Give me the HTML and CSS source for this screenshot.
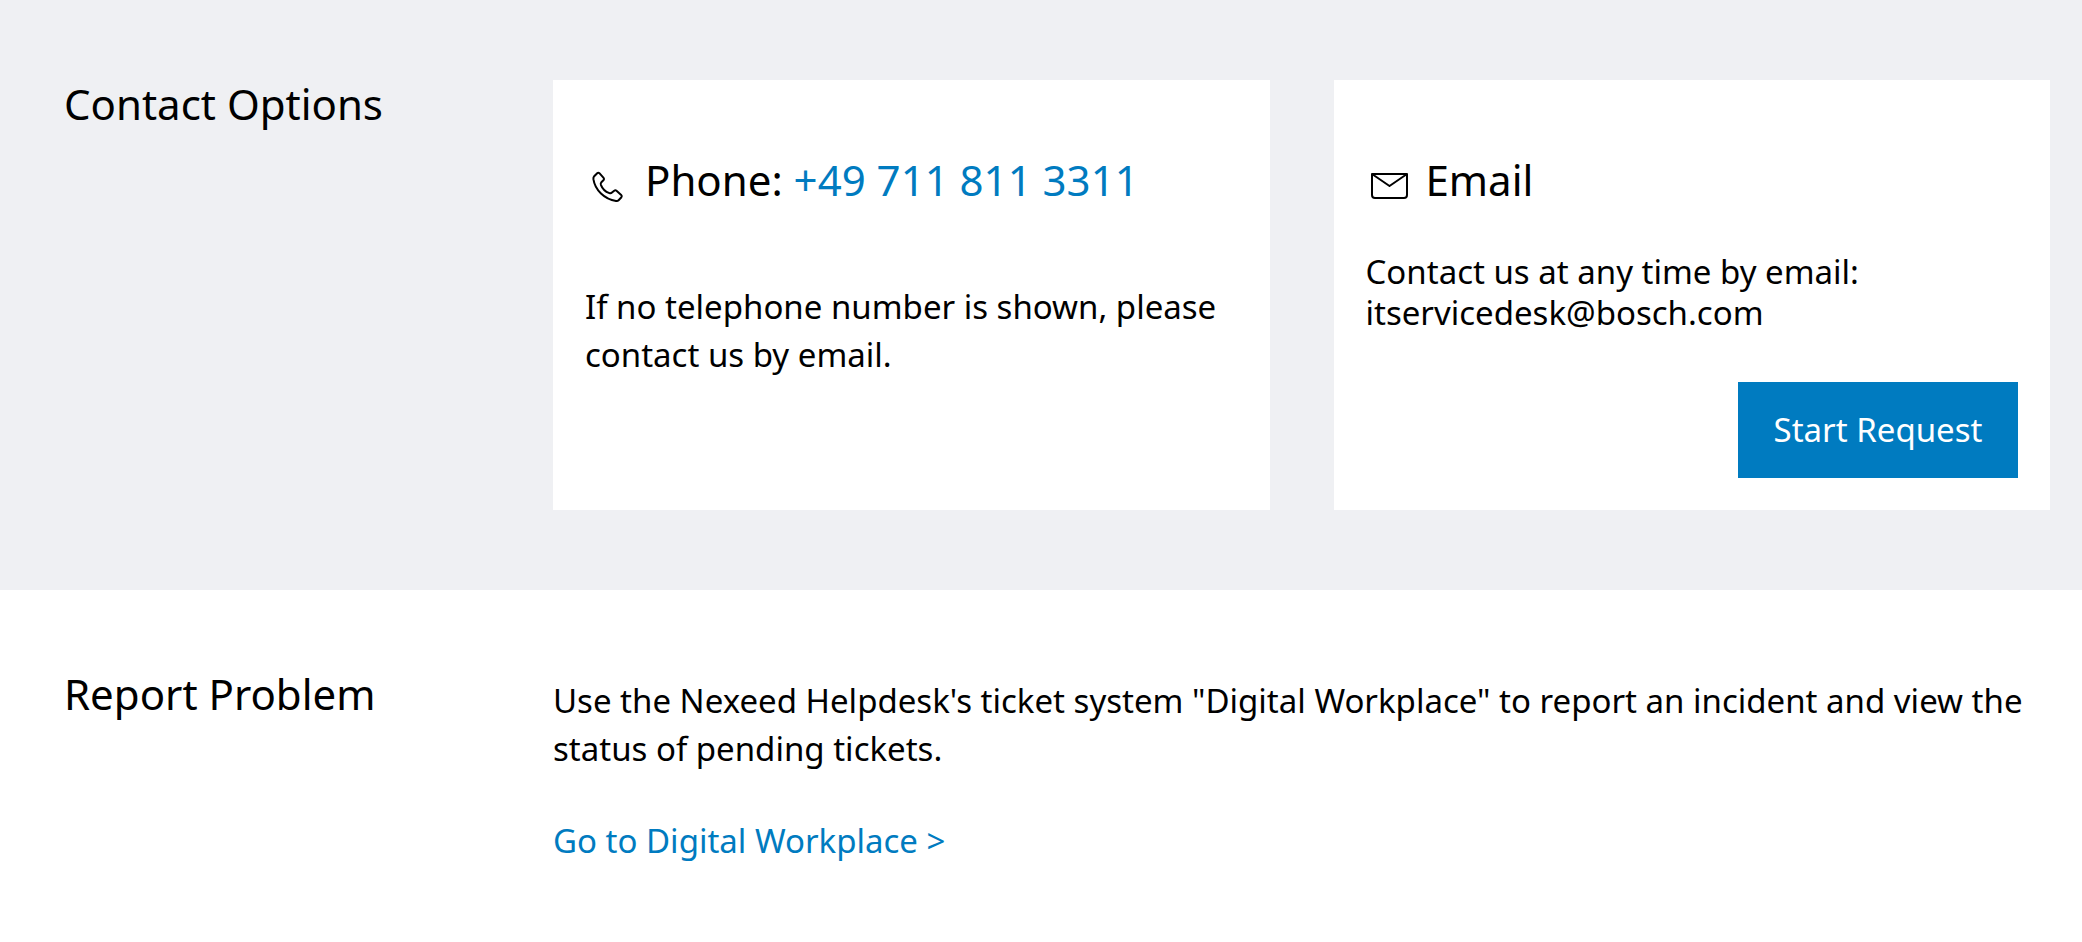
FILE: index.html
```html
<!DOCTYPE html>
<html lang="en">
<head>
<meta charset="utf-8">
<meta name="viewport" content="width=device-width, initial-scale=1.0">
<title>Contact Options</title>
<link rel="stylesheet" href="styles.css">
</head>
<body>
<section class="section section-grey">
	<h2>Contact Options</h2>
	<div class="cards">
		<div class="card">
			<h3>
				<svg class="icon" viewBox="0 0 48 48" aria-hidden="true">
					<path d="M12.2 17.2 Q13.3 16.1 14.4 17.2 L18.6 21.8 Q19.5 22.9 18.6 24 L16.4 26.2 Q15.4 27.3 15.9 28.8 C17.2 32.4 20.4 35.6 24.4 37.1 Q25.9 37.6 27 36.6 L29.2 34.7 Q30.4 33.8 31.5 34.7 L36.2 38.9 Q37.3 40 36.4 41.2 L33.6 44.2 Q32.6 45.2 31 44.9 C19.5 43.5 10 34 8.4 23.2 Q8.2 21.4 9.2 20.2 Z"/>
				</svg>
				<span>Phone: <a href="tel:+497118113311">+49 711 811 3311</a></span>
			</h3>
			<p class="phone-text">If no telephone number is shown, please contact us by email.</p>
		</div>
		<div class="card">
			<h3>
				<svg class="icon" viewBox="0 0 48 48" aria-hidden="true">
					<path d="M6 18 H41 V39 Q41 42 38 42 H9 Q6 42 6 39 Z M6 18 L23.5 30 L41 18"/>
				</svg>
				<span>Email</span>
			</h3>
			<p class="email-text">Contact us at any time by email:<br>itservicedesk@bosch.com</p>
			<button type="button" class="btn">Start Request</button>
		</div>
	</div>
</section>
<section class="section">
	<h2>Report Problem</h2>
	<div class="report">
		<p>Use the Nexeed Helpdesk's ticket system "Digital Workplace" to report an incident and view the status of pending tickets.</p>
		<p><a href="#">Go to Digital Workplace &gt;</a></p>
	</div>
</section>
</body>
</html>
```

FILE: styles.css
```css
*{box-sizing: border-box;}
body,h2,h3,p{margin: 0;padding: 0;}
body{font-family: "Noto Sans", sans-serif;font-size: 33px;line-height: 48px;color: #000;background-color: #fff;}
h2,h3{font-size: 42px;line-height: 48px;font-weight: normal;}
a{color: #007bc0;text-decoration: none;}

.section{display: grid;grid-template-columns: 425px minmax(0, 1fr);column-gap: 64px;padding: 80px 32px 64px 64px;}
.section-grey{padding-bottom: 80px;background-color: #eff0f3;}

/* contact cards */
.cards{display: grid;grid-template-columns: 1fr 1fr;gap: 64px;}
.card{display: flex;flex-direction: column;padding: 76px 32px 32px;background-color: #fff;}
.card h3{display: flex;gap: 12px;}
.icon{flex: none;width: 48px;height: 48px;fill: none;stroke: #000;stroke-width: 2;stroke-linejoin: round;}
.phone-text{margin-top: 79px;}
.email-text{margin-top: 47px;line-height: 41px;}
.btn{align-self: flex-end;min-width: 280px;margin-top: 49px;padding: 24px 32px;border: 0;background-color: #007bc0;color: #fff;font: inherit;cursor: pointer;}

/* report problem */
.report{padding-top: 7px;}
.report p + p{margin-top: 44px;}
```
